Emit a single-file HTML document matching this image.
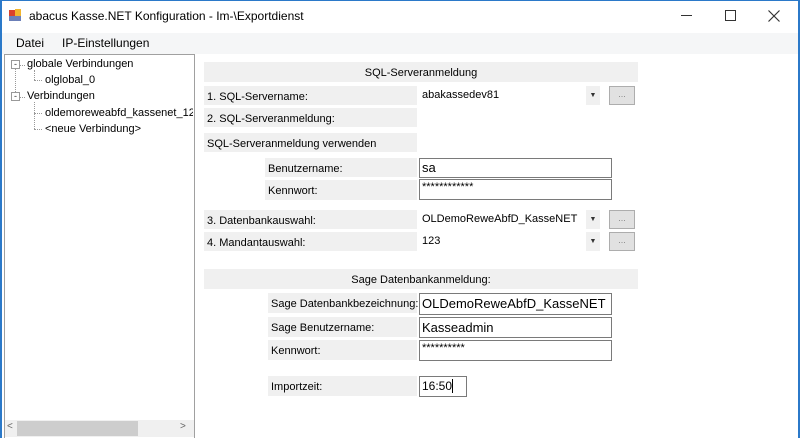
<!DOCTYPE html>
<html><head><meta charset="utf-8"><style>
*{margin:0;padding:0;box-sizing:border-box}
body{width:800px;height:438px;overflow:hidden;background:#fff;font-family:"Liberation Sans",sans-serif;font-size:11px;color:#000;position:relative}
.a{position:absolute}
.lb{position:absolute;background:#f0f0f0;padding-left:3px;padding-top:3px;line-height:16px;white-space:nowrap}
.in{position:absolute;background:#fff;border:1px solid #7a7a7a;padding-left:2px;white-space:nowrap}
.btn{position:absolute;width:26px;height:19px;background:#e1e1e1;border:1px solid #adadad;color:#888;font-size:9px;text-align:center;line-height:15px}
.dd{position:absolute;width:14px;height:19px;background:#f0f0f0;font-size:7px;text-align:center;line-height:19px;color:#333}
.t{position:absolute;white-space:nowrap}
</style></head><body>
<div class="a" style="left:0;top:0;width:2px;height:438px;background:#2b79c9"></div>
<div class="a" style="right:0;top:0;width:2px;height:438px;background:#2b79c9"></div>
<div class="a" style="left:0;top:0;width:800px;height:1px;background:#2b79c9"></div>
<div class="a" style="left:9px;top:10px;width:6px;height:6px;background:#d9412b"></div>
<div class="a" style="left:15px;top:9px;width:6px;height:7px;background:#f1b52d"></div>
<div class="a" style="left:9px;top:16px;width:12px;height:5px;background:#6b7fb8"></div>
<div class="t" style="left:29px;top:9px;font-size:12px">abacus Kasse.NET Konfiguration - Im-\Exportdienst</div>
<div class="a" style="left:681px;top:15px;width:11px;height:1px;background:#333"></div>
<div class="a" style="left:725px;top:10px;width:11px;height:11px;border:1px solid #333"></div>
<svg class="a" style="left:768px;top:10px" width="12" height="12"><path d="M0.5 0.5L11.5 11.5M11.5 0.5L0.5 11.5" stroke="#333" stroke-width="1.2"/></svg>
<div class="a" style="left:2px;top:33px;width:796px;height:21px;background:#f5f6f7"></div>
<div class="t" style="left:16px;top:36px;font-size:12px">Datei</div>
<div class="t" style="left:62px;top:36px;font-size:12px">IP-Einstellungen</div>
<div class="a" style="left:4px;top:54px;width:191px;height:384px;border:1px solid #a0a0a0;border-bottom:none;background:#fff"></div>
<div class="a" style="left:11px;top:60px;width:9px;height:9px;border:1px solid #999;font-size:9px;line-height:6px;text-align:center;color:#333">-</div>
<div class="a" style="left:11px;top:92px;width:9px;height:9px;border:1px solid #999;font-size:9px;line-height:6px;text-align:center;color:#333">-</div>
<div class="a" style="left:15px;top:69px;width:0;height:23px;border-left:1px dotted #999"></div>
<div class="a" style="left:20px;top:65px;width:5px;border-top:1px dotted #999"></div>
<div class="a" style="left:20px;top:97px;width:5px;border-top:1px dotted #999"></div>
<div class="a" style="left:34px;top:70px;width:0;height:10px;border-left:1px dotted #999"></div>
<div class="a" style="left:34px;top:80px;width:8px;border-top:1px dotted #999"></div>
<div class="a" style="left:34px;top:102px;width:0;height:27px;border-left:1px dotted #999"></div>
<div class="a" style="left:34px;top:113px;width:8px;border-top:1px dotted #999"></div>
<div class="a" style="left:34px;top:129px;width:8px;border-top:1px dotted #999"></div>
<div class="t" style="left:27px;top:58px">globale Verbindungen</div>
<div class="t" style="left:45px;top:74px">olglobal_0</div>
<div class="t" style="left:27px;top:90px">Verbindungen</div>
<div class="t" style="left:45px;top:107px;width:148px;overflow:hidden">oldemoreweabfd_kassenet_123</div>
<div class="t" style="left:45px;top:123px">&lt;neue Verbindung&gt;</div>
<div class="a" style="left:5px;top:420px;width:189px;height:17px;background:#f0f0f0"></div>
<div class="a" style="left:17px;top:421px;width:121px;height:15px;background:#cdcdcd"></div>
<div class="t" style="left:7px;top:421px;color:#666;font-size:10px">&lt;</div>
<div class="t" style="left:180px;top:421px;color:#666;font-size:10px">&gt;</div>
<div class="lb" style="left:204px;top:62px;width:434px;height:20px;text-align:center;padding:3px 0 0">SQL-Serveranmeldung</div>
<div class="lb" style="left:204px;top:86px;width:213px;height:19px">1. SQL-Servername:</div>
<div class="t" style="left:422px;top:89px">abakassedev81</div>
<div class="dd" style="left:586px;top:86px">▼</div>
<div class="btn" style="left:609px;top:86px">...</div>
<div class="lb" style="left:204px;top:108px;width:213px;height:19px">2. SQL-Serveranmeldung:</div>
<div class="lb" style="left:204px;top:133px;width:213px;height:19px">SQL-Serveranmeldung verwenden</div>
<div class="lb" style="left:265px;top:158px;width:152px;height:19px">Benutzername:</div>
<div class="in" style="left:419px;top:158px;width:193px;height:20px;font-size:13px;line-height:18px">sa</div>
<div class="lb" style="left:265px;top:180px;width:152px;height:20px">Kennwort:</div>
<div class="in" style="left:419px;top:179px;width:193px;height:21px;line-height:14px">************</div>
<div class="lb" style="left:204px;top:210px;width:213px;height:19px">3. Datenbankauswahl:</div>
<div class="t" style="left:422px;top:213px">OLDemoReweAbfD_KasseNET</div>
<div class="dd" style="left:586px;top:210px">▼</div>
<div class="btn" style="left:609px;top:210px">...</div>
<div class="lb" style="left:204px;top:232px;width:213px;height:19px">4. Mandantauswahl:</div>
<div class="t" style="left:422px;top:235px">123</div>
<div class="dd" style="left:586px;top:232px">▼</div>
<div class="btn" style="left:609px;top:232px">...</div>
<div class="lb" style="left:204px;top:269px;width:434px;height:20px;text-align:center;padding:3px 0 0">Sage Datenbankanmeldung:</div>
<div class="lb" style="left:268px;top:293px;width:149px;height:20px">Sage Datenbankbezeichnung:</div>
<div class="in" style="left:419px;top:293px;width:193px;height:22px;font-size:13px;line-height:20px">OLDemoReweAbfD_KasseNET</div>
<div class="lb" style="left:268px;top:317px;width:149px;height:20px">Sage Benutzername:</div>
<div class="in" style="left:419px;top:317px;width:193px;height:21px;font-size:13px;line-height:19px">Kasseadmin</div>
<div class="lb" style="left:268px;top:340px;width:149px;height:20px">Kennwort:</div>
<div class="in" style="left:419px;top:340px;width:193px;height:21px;line-height:14px">**********</div>
<div class="lb" style="left:268px;top:376px;width:149px;height:20px">Importzeit:</div>
<div class="in" style="left:419px;top:376px;width:48px;height:21px;font-size:12px;line-height:19px">16:50<span style="border-left:1px solid #000"></span></div>
</body></html>
